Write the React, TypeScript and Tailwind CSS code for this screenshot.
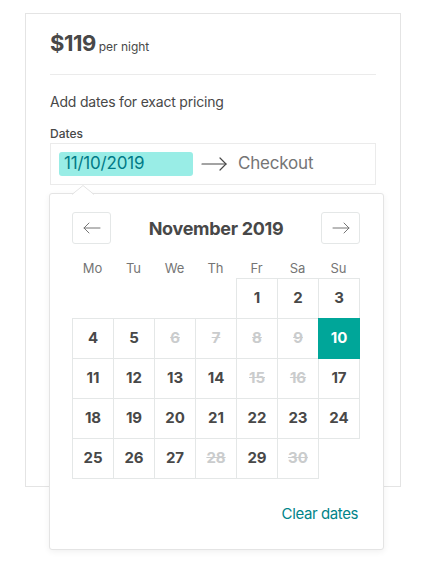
import React from "react";

const TEXT = "text-[#484848]";

type Cell = { d: number | null; dis?: boolean; sel?: boolean };

const rows: Cell[][] = [
  [{ d: null }, { d: null }, { d: null }, { d: null }, { d: 1 }, { d: 2 }, { d: 3 }],
  [{ d: 4 }, { d: 5 }, { d: 6, dis: true }, { d: 7, dis: true }, { d: 8, dis: true }, { d: 9, dis: true }, { d: 10, sel: true }],
  [{ d: 11 }, { d: 12 }, { d: 13 }, { d: 14 }, { d: 15, dis: true }, { d: 16, dis: true }, { d: 17 }],
  [{ d: 18 }, { d: 19 }, { d: 20 }, { d: 21 }, { d: 22 }, { d: 23 }, { d: 24 }],
  [{ d: 25 }, { d: 26 }, { d: 27 }, { d: 28, dis: true }, { d: 29 }, { d: 30, dis: true }, { d: null }],
];

function Arrow({ dir }: { dir: "left" | "right" }) {
  return (
    <svg width="18" height="12" viewBox="0 0 18 12" fill="none" stroke="#757575" strokeWidth="1" strokeLinecap="round">
      {dir === "left" ? (
        <>
          <path d="M1 6 H17" />
          <path d="M6 1 L1 6 L6 11" />
        </>
      ) : (
        <>
          <path d="M1 6 H17" />
          <path d="M12 1 L17 6 L12 11" />
        </>
      )}
    </svg>
  );
}

export default function App() {
  return (
    <div className="w-[447px] h-[562px] bg-white pt-[13px] pl-[25px] font-['Inter',sans-serif]">
      <div className="relative w-[376px] h-[474px] border border-[#e4e4e4] px-[24px] pt-[15px]">
        <div className={`flex items-baseline ${TEXT}`}>
          <span className="text-[22px] leading-[28px] font-bold tracking-[-0.5px]">$119</span>
          <span className="text-[12px] ml-[3px]">per night</span>
        </div>
        <div className="mt-[17px] h-px bg-[#ebebeb]" />
        <div className={`mt-[17px] text-[14px] leading-[20px] tracking-[-0.2px] ${TEXT}`}>Add dates for exact pricing</div>
        <div className={`mt-[14px] text-[12px] leading-[16px] font-medium ${TEXT}`}>Dates</div>
        <div className="relative mt-px">
          <div className="h-[42px] border border-[#ebebeb] flex items-center pl-[8px]">
            <div className="w-[134px] h-[24px] bg-[#99ede6] rounded-[3px] flex items-center pl-[5px] text-[17px] text-[#007a87] tracking-[-0.2px]">
              11/10/2019
            </div>
            <svg className="ml-[8px]" width="26" height="14" viewBox="0 0 26 14" fill="none" stroke="#484848" strokeWidth="1.2" strokeLinecap="round">
              <path d="M1 7 H25" />
              <path d="M19 1 L25 7 L19 13" />
            </svg>
            <span className="ml-[11px] text-[17px] text-[#757575] tracking-[-0.2px]">Checkout</span>
          </div>
          {/* popup */}
          <div className="absolute left-[-1px] top-[50px] w-[335px] h-[357px] bg-white border border-[#e4e4e4] rounded-[3px] shadow-[0_2px_6px_rgba(0,0,0,0.06)] px-[22px] pt-[18px] z-10">
            <svg className="absolute left-[22px] top-[-9px]" width="22" height="10" viewBox="0 0 22 10">
              <path d="M0 10 L11 0.5 L22 10 Z" fill="white" />
              <path d="M0 9.5 L11 0.5 L22 9.5" fill="none" stroke="#e4e4e4" strokeWidth="1" />
            </svg>
            <div className="flex items-center justify-between w-[288px]">
              <div className="w-[39px] h-[32px] border border-[#e4e7e7] rounded-[3px] flex items-center justify-center">
                <Arrow dir="left" />
              </div>
              <div className={`text-[18px] font-bold ${TEXT} tracking-[-0.3px]`}>November 2019</div>
              <div className="w-[39px] h-[32px] border border-[#e4e7e7] rounded-[3px] flex items-center justify-center">
                <Arrow dir="right" />
              </div>
            </div>
            <div className="mt-[16px] mb-[2px] h-[16px] grid grid-cols-[repeat(7,41px)] text-[13px] leading-[16px] text-[#757575]">
              {["Mo", "Tu", "We", "Th", "Fr", "Sa", "Su"].map((h) => (
                <div key={h} className="text-center">{h}</div>
              ))}
            </div>
            <div className="grid grid-cols-[repeat(7,41px)] auto-rows-[40px]">
              {rows.flat().map((c, i) => {
                if (c.d === null) return <div key={i} />;
                const base =
                  "w-[42px] h-[41px] border flex items-center justify-center text-[15px] font-bold";
                if (c.sel)
                  return (
                    <div key={i} className={`${base} relative z-10 bg-[#00a699] border-[#00a699] text-white`}>
                      {c.d}
                    </div>
                  );
                return (
                  <div
                    key={i}
                    className={`${base} border-[#e4e7e7] bg-white ${c.dis ? "text-[#cacccd] line-through" : TEXT}`}
                  >
                    {c.d}
                  </div>
                );
              })}
            </div>
            <div className="mt-[26px] w-[286px] text-right text-[15px] leading-[20px] tracking-[-0.4px] text-[#008489]">Clear dates</div>
          </div>
        </div>
      </div>
    </div>
  );
}
